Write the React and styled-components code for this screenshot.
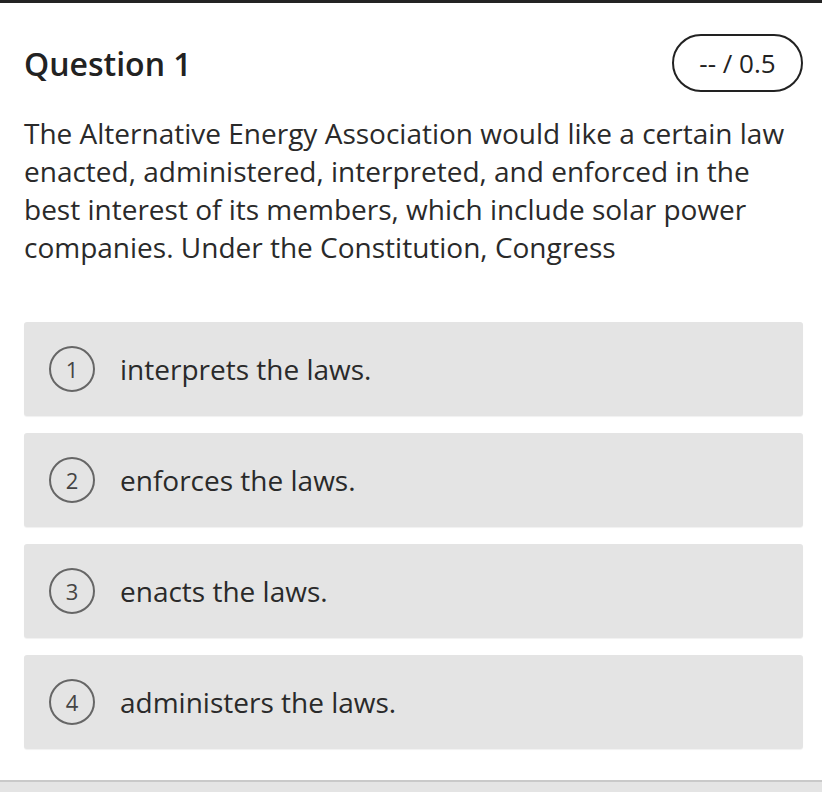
import React from "react";
import styled, { createGlobalStyle } from "styled-components";

const GlobalStyle = createGlobalStyle`
  html, body {
    margin: 0;
    padding: 0;
    background: #ffffff;
    font-family: "Open Sans", "Noto Sans", sans-serif;
  }
`;

const options = [
  "interprets the laws.",
  "enforces the laws.",
  "enacts the laws.",
  "administers the laws.",
];

const App = () => {
  return (
    <>
      <GlobalStyle />
      <Page>
        <Card>
          <Header>
            <Title>Question 1</Title>
            <Score>-- / 0.5</Score>
          </Header>
          <Prompt>
            The Alternative Energy Association would like a certain law
            enacted, administered, interpreted, and enforced in the best
            interest of its members, which include solar power companies.
            Under the Constitution, Congress
          </Prompt>
          <Options>
            {options.map((text, i) => (
              <Option key={text}>
                <Badge>{i + 1}</Badge>
                <OptionText>{text}</OptionText>
              </Option>
            ))}
          </Options>
        </Card>
        <Footer />
      </Page>
    </>
  );
};

const Page = styled.div`
  width: 822px;
  height: 792px;
  display: flex;
  flex-direction: column;
  border-top: 3px solid #232323;
  box-sizing: border-box;
  overflow: hidden;
`;

const Card = styled.div`
  flex: 1;
  padding: 31px 19px 0 24px;
  display: flex;
  flex-direction: column;
`;

const Header = styled.div`
  display: flex;
  align-items: center;
  justify-content: space-between;
  height: 58px;
`;

const Title = styled.h2`
  margin: 0;
  font-size: 32px;
  font-weight: 600;
  color: #222;
`;

const Score = styled.div`
  width: 131px;
  height: 58px;
  box-sizing: border-box;
  display: flex;
  align-items: center;
  justify-content: center;
  border: 2px solid #222;
  border-radius: 29px;
  font-size: 26px;
  color: #222;
`;

const Prompt = styled.p`
  margin: 22px 0 0;
  max-width: 770px;
  font-size: 28px;
  line-height: 38px;
  color: #2a2a2a;
`;

const Options = styled.div`
  margin-top: 56px;
  display: flex;
  flex-direction: column;
  gap: 17px;
`;

const Option = styled.div`
  height: 94px;
  display: flex;
  align-items: center;
  background: #e4e4e4;
  border-radius: 3px;
  padding-left: 25px;
  box-shadow: 0 1px 1px rgba(0, 0, 0, 0.06);
`;

const Badge = styled.span`
  width: 46px;
  height: 46px;
  box-sizing: border-box;
  border: 2px solid #666;
  border-radius: 50%;
  display: flex;
  align-items: center;
  justify-content: center;
  font-size: 22px;
  color: #444;
  flex-shrink: 0;
`;

const OptionText = styled.span`
  margin-left: 25px;
  font-size: 28px;
  color: #2a2a2a;
`;

const Footer = styled.div`
  height: 10px;
  background: #e4e4e4;
  border-top: 2px solid #c9c9c9;
`;

export default App;
